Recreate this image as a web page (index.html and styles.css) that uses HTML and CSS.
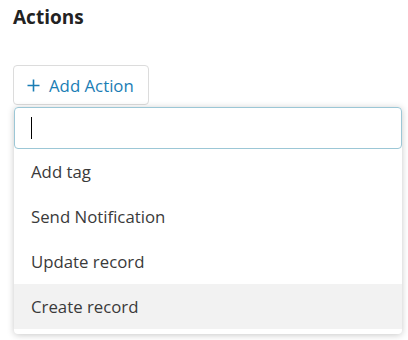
FILE: index.html
```html
<!DOCTYPE html>
<html lang="en">
<head>
    <meta charset="UTF-8">
    <title>Actions</title>
    <link rel="stylesheet" href="styles.css">
</head>
<body>
    <div class="page">
        <h2 class="section-title">Actions</h2>
        <button class="add-btn" type="button">
            <svg class="plus-icon" width="13" height="13" viewBox="0 0 13 13">
                <path d="M6.5 0.5v12M0.5 6.5h12" stroke="currentColor" stroke-width="1.6" fill="none"/>
            </svg>
            Add Action
        </button>
        <!-- Action picker dropdown -->
        <div class="picker">
            <div class="picker-search"><span class="caret"></span></div>
            <ul class="picker-list">
                <li>Add tag</li>
                <li>Send Notification</li>
                <li>Update record</li>
                <li class="active">Create record</li>
            </ul>
        </div>
    </div>
</body>
</html>
```

FILE: styles.css
```css
html, body {
    margin: 0;
    padding: 0;
    background: #fff;
}
body {
    width: 408px;
    height: 340px;
    overflow: hidden;
    font-family: "Open Sans", "DejaVu Sans", sans-serif;
    color: #333;
}
.page {
    padding: 4px 6px 0 13px;
}
.section-title {
    margin: 0 0 35px 0;
    font-size: 19px;
    line-height: 26px;
    font-weight: 700;
    color: #222;
}
.add-btn {
    display: flex;
    align-items: center;
    gap: 9px;
    height: 40px;
    padding: 0 14px 0 13px;
    background: #fff;
    border: 1px solid #dcdcdc;
    border-radius: 4px;
    font-family: inherit;
    font-size: 16.8px;
    color: #1a7db5;
    cursor: pointer;
}
.plus-icon {
    display: block;
}
/* Dropdown */
.picker {
    margin: 2px 0 0 1px;
    background: #fff;
    border-radius: 4px;
    box-shadow: 0 1px 7px rgba(0, 0, 0, 0.22);
    padding-bottom: 5px;
}
.picker-search {
    height: 40px;
    border: 1px solid #9cc7d6;
    border-radius: 4px;
    display: flex;
    align-items: center;
    padding-left: 16px;
}
.caret {
    display: block;
    width: 1px;
    height: 22px;
    background: #000;
}
.picker-list {
    list-style: none;
    margin: 0;
    padding: 0;
}
.picker-list li {
    height: 45px;
    line-height: 45px;
    padding-left: 17px;
    font-size: 16.8px;
    color: #3a3a3a;
}
.picker-list li.active {
    background: #f2f2f2;
}
```
